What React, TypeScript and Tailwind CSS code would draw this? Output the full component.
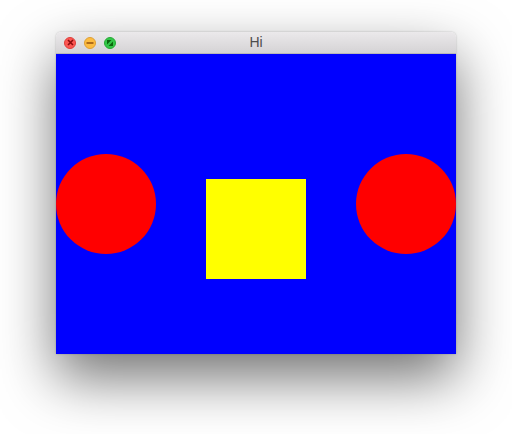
import React from 'react';

function TrafficLight({ color, border, glyph }: { color: string; border: string; glyph: React.ReactNode }) {
  return (
    <span
      className={`flex h-3 w-3 items-center justify-center rounded-full border ${color} ${border}`}
    >
      {glyph}
    </span>
  );
}

export default function App() {
  return (
    <div className="h-[434px] w-[512px] bg-white pl-[56px] pt-[32px]" style={{ fontFamily: '"Helvetica Neue", "Liberation Sans", Arial, sans-serif' }}>
      <div className="w-[400px] rounded-t-[5px] shadow-[0_24px_56px_rgba(0,0,0,0.55),0_0_2px_rgba(0,0,0,0.25)]">
        {/* title bar */}
        <div className="relative flex h-[22px] items-center gap-2 rounded-t-[5px] border-b border-[#b9b7b9] bg-gradient-to-b from-[#ebe9eb] to-[#d5d3d5] pl-2">
          <TrafficLight
            color="bg-[#fc5753]"
            border="border-[#df3e3a]"
            glyph={
              <svg width="7" height="7" viewBox="0 0 7 7">
                <path d="M1 1L6 6M6 1L1 6" stroke="#8a0a0c" strokeWidth="1.6" />
              </svg>
            }
          />
          <TrafficLight
            color="bg-[#fdbc40]"
            border="border-[#de9f34]"
            glyph={
              <svg width="8" height="8" viewBox="0 0 8 8">
                <path d="M0.5 4H7.5" stroke="#985712" strokeWidth="1.6" />
              </svg>
            }
          />
          <TrafficLight
            color="bg-[#33c748]"
            border="border-[#27aa35]"
            glyph={
              <svg width="8" height="8" viewBox="0 0 8 8">
                <path d="M1 1H5.5L1 5.5Z M7 7H2.5L7 2.5Z" fill="#0b650d" />
              </svg>
            }
          />
          <span className="absolute inset-0 flex items-center justify-center text-[14px] text-[#4d4d4d]">
            Hi
          </span>
        </div>
        {/* content */}
        <div className="flex h-[300px] items-center justify-between bg-[#0000ff]">
          <div className="h-[100px] w-[100px] rounded-full bg-[#ff0000]" />
          <div className="mt-[50px] h-[100px] w-[100px] bg-[#ffff00]" />
          <div className="h-[100px] w-[100px] rounded-full bg-[#ff0000]" />
        </div>
      </div>
    </div>
  );
}
